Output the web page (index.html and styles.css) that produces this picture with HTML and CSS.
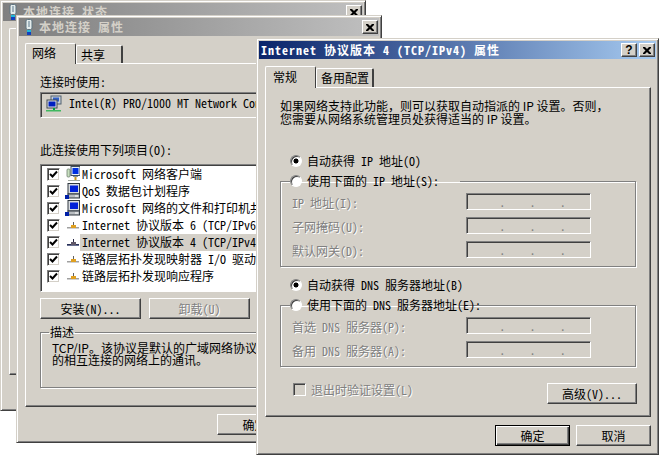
FILE: index.html
```html
<!DOCTYPE html>
<html lang="zh-CN">
<head>
    <meta charset="UTF-8">
    <title>Internet 协议版本 4 (TCP/IPv4) 属性</title>
    <link rel="stylesheet" href="styles.css">
</head>
<body>
    <svg class="defs" width="0" height="0">
        <symbol id="i-conn" viewBox="0 0 16 16">
            <rect x="5" y="0.5" width="6" height="10" rx="1.5" fill="#e4ecec" stroke="#5f7480"/>
            <rect x="7" y="2" width="2" height="6" fill="#9fb2bc"/>
            <rect x="6" y="11" width="4" height="2" fill="#21b8d8"/>
            <rect x="6" y="13" width="4" height="3" fill="#1040c0"/>
        </symbol>
        <symbol id="i-close" viewBox="0 0 8 7">
            <path d="M0 0h2l2 2 2-2h2v1L5.500 3.500 8 6v1H6L4 5 2 7H0V6l2.500-2.500L0 1z" fill="#000"/>
        </symbol>
        <symbol id="i-nic" viewBox="0 0 16 17">
            <rect x="5" y="1" width="10" height="8" fill="#c8d0d8" stroke="#506070"/>
            <rect x="7" y="2.500" width="6" height="4" fill="#3060c8"/>
            <rect x="1" y="5" width="10" height="8" fill="#e0e4e8" stroke="#404850"/>
            <rect x="2.500" y="6.500" width="7" height="5" fill="#0020c0"/>
            <rect x="7" y="13" width="2" height="2" fill="#00a040"/>
            <rect x="0" y="15" width="15" height="1.500" fill="#40b860"/>
        </symbol>
        <symbol id="i-client" viewBox="0 0 16 17">
            <rect x="3" y="3" width="3" height="8" rx="1" fill="#c8e0c0" stroke="#708070" stroke-width="0.800"/>
            <rect x="7" y="0.500" width="9" height="9" fill="#e8f0f8" stroke="#405060"/>
            <rect x="8.500" y="2" width="6" height="6" fill="#0030e0"/>
            <rect x="9" y="10" width="5" height="1" fill="#8090a0"/>
            <rect x="10.500" y="11" width="2" height="3" fill="#c89820"/>
            <rect x="4" y="14" width="12" height="1" fill="#a0a8a0"/>
        </symbol>
        <symbol id="i-svc" viewBox="0 0 16 17">
            <rect x="4" y="0.500" width="11.500" height="10.500" fill="#d8dce0" stroke="#303840"/>
            <rect x="6" y="2.500" width="8" height="6.500" fill="#0020d8"/>
            <rect x="4" y="11" width="11.500" height="4" fill="#b8bcc0" stroke="#303840"/>
            <rect x="11" y="12.500" width="3" height="1" fill="#fff"/>
            <rect x="1" y="12" width="4" height="4" fill="#0020a8"/>
        </symbol>
        <symbol id="i-proto" viewBox="0 0 16 17">
            <rect x="3" y="10" width="12" height="1" fill="#a0a0a0"/>
            <rect x="3" y="11" width="12" height="1" fill="#d0d0d0"/>
            <rect x="9" y="5" width="1" height="3" fill="#606060"/>
            <rect x="7" y="8" width="5" height="3" fill="#e0a020"/>
        </symbol>
        <symbol id="i-proto-on" viewBox="0 0 16 17">
            <rect x="3" y="10" width="12" height="1" fill="#283058"/>
            <rect x="3" y="11" width="12" height="1" fill="#687090"/>
            <rect x="9" y="5" width="1" height="3" fill="#282848"/>
            <rect x="7" y="8" width="5" height="3" fill="#605868"/>
        </symbol>
        <symbol id="i-check" viewBox="0 0 9 9">
            <path d="M1 4 L3.500 6.500 L8 1.500" fill="none" stroke="#000" stroke-width="2"/>
        </symbol>
    </svg>

    <!-- back window, almost everything is covered -->
    <div class="win win-status">
        <div class="title-bar off">
            <svg class="title-icon"><use href="#i-conn"/></svg>
            <span class="title-text">本地连接 状态</span>
            <div class="title-btn"><svg><use href="#i-close"/></svg></div>
        </div>
        <div class="win-body">
            <div class="tabs">
                <div class="tab on">常规</div>
            </div>
            <div class="panel"></div>
        </div>
    </div>

    <div class="win win-props">
        <div class="title-bar off">
            <svg class="title-icon"><use href="#i-conn"/></svg>
            <span class="title-text">本地连接 属性</span>
            <div class="title-btn"><svg><use href="#i-close"/></svg></div>
        </div>
        <div class="win-body">
            <div class="tabs">
                <div class="tab on">网络</div>
                <div class="tab">共享</div>
            </div>
            <div class="panel props-panel">
                <div class="line label-first">连接时使用:</div>
                <div class="nic-box">
                    <svg class="nic-icon"><use href="#i-nic"/></svg>
                    <span>Intel(R) PRO/1000 MT Network Connection</span>
                </div>
                <div class="line label-items">此连接使用下列项目(O):</div>
                <div class="item-list">
                    <div class="item">
                        <span class="check"><svg><use href="#i-check"/></svg></span>
                        <svg class="item-icon"><use href="#i-client"/></svg>
                        <span class="item-text">Microsoft 网络客户端</span>
                    </div>
                    <div class="item">
                        <span class="check"><svg><use href="#i-check"/></svg></span>
                        <svg class="item-icon"><use href="#i-svc"/></svg>
                        <span class="item-text">QoS 数据包计划程序</span>
                    </div>
                    <div class="item">
                        <span class="check"><svg><use href="#i-check"/></svg></span>
                        <svg class="item-icon"><use href="#i-svc"/></svg>
                        <span class="item-text">Microsoft 网络的文件和打印机共享</span>
                    </div>
                    <div class="item">
                        <span class="check"><svg><use href="#i-check"/></svg></span>
                        <svg class="item-icon"><use href="#i-proto"/></svg>
                        <span class="item-text">Internet 协议版本 6 (TCP/IPv6)</span>
                    </div>
                    <div class="item selected">
                        <span class="check"><svg><use href="#i-check"/></svg></span>
                        <svg class="item-icon"><use href="#i-proto-on"/></svg>
                        <span class="item-text">Internet 协议版本 4 (TCP/IPv4)</span>
                    </div>
                    <div class="item">
                        <span class="check"><svg><use href="#i-check"/></svg></span>
                        <svg class="item-icon"><use href="#i-proto"/></svg>
                        <span class="item-text">链路层拓扑发现映射器 I/O 驱动程序</span>
                    </div>
                    <div class="item">
                        <span class="check"><svg><use href="#i-check"/></svg></span>
                        <svg class="item-icon"><use href="#i-proto"/></svg>
                        <span class="item-text">链路层拓扑发现响应程序</span>
                    </div>
                </div>
                <div class="list-btns">
                    <button class="btn wide">安装(N)...</button>
                    <button class="btn wide" disabled>卸载(U)</button>
                </div>
                <fieldset class="group desc-group">
                    <legend class="desc-legend">描述</legend>
                    <div class="desc-text">TCP/IP。该协议是默认的广域网络协议<br>的相互连接的网络上的通讯。</div>
                </fieldset>
            </div>
            <div class="win-footer">
                <button class="btn">确定</button>
                <button class="btn">取消</button>
            </div>
        </div>
    </div>

    <div class="win win-ipv4">
        <div class="title-bar">
            <span class="title-text">Internet 协议版本 4 (TCP/IPv4) 属性</span>
            <div class="title-btn help">?</div>
            <div class="title-btn"><svg><use href="#i-close"/></svg></div>
        </div>
        <div class="win-body">
            <div class="tabs">
                <div class="tab on">常规</div>
                <div class="tab">备用配置</div>
            </div>
            <div class="panel ipv4-panel">
                <div class="intro">如果网络支持此功能，则可以获取自动指派的 IP 设置。否则，<br>您需要从网络系统管理员处获得适当的 IP 设置。</div>

                <div class="radio-row first-radio"><span class="radio on"></span>自动获得 IP 地址(O)</div>
                <fieldset class="group">
                    <legend class="radio-row"><span class="radio"></span>使用下面的 IP 地址(S):</legend>
                    <div class="field-row">
                        <span class="dim">IP 地址(I):</span>
                        <div class="ip-field"><span>.</span><span>.</span><span>.</span></div>
                    </div>
                    <div class="field-row">
                        <span class="dim">子网掩码(U):</span>
                        <div class="ip-field"><span>.</span><span>.</span><span>.</span></div>
                    </div>
                    <div class="field-row">
                        <span class="dim">默认网关(D):</span>
                        <div class="ip-field"><span>.</span><span>.</span><span>.</span></div>
                    </div>
                </fieldset>

                <div class="radio-row second-radio"><span class="radio on"></span>自动获得 DNS 服务器地址(B)</div>
                <fieldset class="group">
                    <legend class="radio-row"><span class="radio"></span>使用下面的 DNS 服务器地址(E):</legend>
                    <div class="field-row">
                        <span class="dim">首选 DNS 服务器(P):</span>
                        <div class="ip-field"><span>.</span><span>.</span><span>.</span></div>
                    </div>
                    <div class="field-row">
                        <span class="dim">备用 DNS 服务器(A):</span>
                        <div class="ip-field"><span>.</span><span>.</span><span>.</span></div>
                    </div>
                </fieldset>

                <div class="panel-bottom">
                    <div class="check-row">
                        <span class="check off"></span>
                        <span class="dim">退出时验证设置(L)</span>
                    </div>
                    <button class="btn adv">高级(V)...</button>
                </div>
            </div>
            <div class="win-footer">
                <button class="btn default">确定</button>
                <button class="btn">取消</button>
            </div>
        </div>
    </div>
</body>
</html>
```

FILE: styles.css
```css
html, body {
    margin: 0;
    padding: 0;
    background: #fff;
}
body {
    width: 665px;
    height: 465px;
    overflow: hidden;
    font-family: "Noto Sans CJK SC", "Liberation Mono", monospace;
    font-feature-settings: "hwid";
    font-size: 12px;
    line-height: 14px;
    color: #000;
}
.defs {
    display: block;
}

/* windows */
.win {
    position: absolute;
    isolation: isolate;
    box-sizing: border-box;
    display: flex;
    flex-direction: column;
    overflow: hidden;
    padding: 2px;
    background: #d4d0c8;
    border: 1px solid;
    border-color: #d4d0c8 #404040 #404040 #d4d0c8;
    box-shadow: inset 1px 1px #fff, inset -1px -1px #808080;
}
.win-status {
    left: 0;
    top: 0;
    width: 366px;
    height: 411px;
}
.win-props {
    left: 16px;
    top: 15px;
    width: 366px;
    height: 428px;
}
.win-ipv4 {
    left: 256px;
    top: 38px;
    width: 403px;
    height: 417px;
}

/* title bars */
.title-bar {
    display: flex;
    align-items: center;
    flex: none;
    height: 18px;
    padding: 0 1px 0 2px;
    background: linear-gradient(to right, #0a246a, #a6caf0);
    color: #fff;
}
.title-bar.off {
    background: linear-gradient(to right, #808080, #c0c0c0);
    color: #d4d0c8;
}
.title-icon {
    flex: none;
    width: 16px;
    height: 16px;
    margin-right: 2px;
}
.title-text {
    flex: 1;
    font-weight: bold;
    letter-spacing: 1px;
    white-space: nowrap;
}
.title-btn {
    display: flex;
    align-items: center;
    justify-content: center;
    flex: none;
    box-sizing: border-box;
    width: 16px;
    height: 14px;
    background: #d4d0c8;
    color: #000;
    font: bold 12px/12px "Liberation Sans", sans-serif;
    border: 1px solid;
    border-color: #fff #404040 #404040 #fff;
    box-shadow: inset -1px -1px #808080;
}
.title-btn svg {
    width: 8px;
    height: 7px;
    margin-right: 1px;
}
.title-btn.help {
    margin-right: 2px;
}

/* window content */
.win-body {
    display: flex;
    flex-direction: column;
    flex: 1;
    min-height: 0;
    padding: 7px 5px 5px 6px;
}
.win-props .win-body {
    padding-right: 6px;
}
.win-ipv4 .win-body {
    padding-bottom: 6px;
}
.tabs {
    display: flex;
    align-items: flex-end;
    flex: none;
    height: 20px;
}
.win-ipv4 .tabs {
    height: 21px;
}
.tab {
    box-sizing: border-box;
    height: 18px;
    padding: 2px 3px 0 4px;
    background: #d4d0c8;
    border: 1px solid #fff;
    border-bottom: none;
    border-right: 2px solid #404040;
    border-radius: 2px 2px 0 0;
}
.win-props .tab {
    width: 47px;
}
.win-ipv4 .tab {
    height: 19px;
}
.tab.on {
    position: relative;
    z-index: 1;
    width: 51px;
    height: 21px;
    margin-bottom: -1px;
    padding: 2px 6px 0;
    border-right: 1px solid #404040;
}
.win-ipv4 .tab.on {
    height: 22px;
    padding: 3px 6px 0 7px;
}
.panel {
    flex: 1;
    min-height: 0;
    box-sizing: border-box;
    padding: 0 14px;
    background: #d4d0c8;
    border: 1px solid;
    border-color: #fff #404040 #404040 #fff;
    box-shadow: inset -1px -1px #808080;
}
.win-status .panel {
    margin-bottom: 28px;
}
.win-footer {
    display: flex;
    justify-content: flex-end;
    flex: none;
    gap: 6px;
    margin-top: 7px;
}
.win-ipv4 .win-footer {
    margin-top: 8px;
}

/* buttons */
.btn {
    box-sizing: border-box;
    width: 75px;
    height: 21px;
    padding: 0;
    background: #d4d0c8;
    font: inherit;
    font-feature-settings: inherit;
    color: #000;
    border: 1px solid;
    border-color: #fff #404040 #404040 #fff;
    box-shadow: inset -1px -1px #808080;
}
.btn.default {
    border-color: #000;
    box-shadow: inset 1px 1px #fff, inset -1px -1px #404040, inset -2px -2px #808080;
}
.btn:disabled {
    color: #808080;
    text-shadow: 1px 1px 0 #fff;
}
.btn.wide {
    width: 101px;
}
.btn.adv {
    width: 90px;
    margin-right: -1px;
}

/* properties tab */
.label-first {
    margin-top: 11px;
}
.nic-box {
    display: flex;
    align-items: center;
    box-sizing: border-box;
    height: 26px;
    margin-top: 3px;
    padding: 0 0 4px 5px;
    white-space: nowrap;
    border: 1px solid;
    border-color: #808080 #fff #fff #808080;
    box-shadow: inset 1px 1px #404040;
}
.nic-icon {
    flex: none;
    width: 16px;
    height: 17px;
    margin-right: 7px;
}
.label-items {
    margin-top: 25px;
}
.item-list {
    box-sizing: border-box;
    height: 128px;
    margin-top: 7px;
    padding-top: 1px;
    background: #fff;
    border: 1px solid;
    border-color: #808080 #fff #fff #808080;
    box-shadow: inset 1px 1px #404040;
}
.item {
    display: flex;
    align-items: center;
    height: 17px;
    padding-left: 6px;
    white-space: nowrap;
}
.check {
    display: flex;
    align-items: center;
    justify-content: center;
    flex: none;
    box-sizing: border-box;
    width: 13px;
    height: 13px;
    background: #fff;
    border: 1px solid;
    border-color: #808080 #fff #fff #808080;
    box-shadow: inset 1px 1px #404040, inset -1px -1px #d4d0c8;
}
.check svg {
    width: 9px;
    height: 9px;
}
.check.off {
    background: #d4d0c8;
}
.item-icon {
    flex: none;
    width: 16px;
    height: 17px;
    margin-left: 4px;
}
.item-text {
    flex: 1;
    height: 17px;
    line-height: 15px;
    padding-left: 2px;
}
.item.selected .item-text {
    background: #d4d0c8;
}
.list-btns {
    display: flex;
    gap: 8px;
    margin-top: 6px;
}
.group {
    min-width: 0;
    margin: 6px 0 0;
    padding: 5px 0 8px;
    border: 1px solid #808080;
    box-shadow: inset 1px 1px #fff, 1px 1px #fff;
}
.desc-group {
    box-sizing: border-box;
    height: 63px;
    padding: 3px 0 0 11px;
}
.desc-legend {
    margin-left: -3px;
    padding: 0 1px;
}
/* hwid would squeeze the chinese punctuation in running text */
.desc-text {
    font-feature-settings: normal;
    line-height: 12px;
    white-space: nowrap;
}

/* ip settings tab */
.intro {
    margin-top: 11px;
    font-feature-settings: normal;
    line-height: 13px;
    white-space: nowrap;
}
.radio-row {
    display: flex;
    align-items: center;
    height: 14px;
    padding-left: 10px;
    white-space: nowrap;
}
legend.radio-row {
    box-sizing: border-box;
    width: 170px;
    margin-left: 9px;
    padding: 0;
}
.first-radio {
    margin-top: 29px;
}
.second-radio {
    margin-top: 11px;
}
.radio {
    flex: none;
    box-sizing: border-box;
    width: 12px;
    height: 12px;
    margin-right: 5px;
    background: #fff;
    border: 1px solid;
    border-color: #808080 #fff #fff #808080;
    border-radius: 50%;
    box-shadow: inset 1px 1px #404040;
}
.radio.on {
    background: radial-gradient(circle at center, #000 2.2px, #fff 2.8px);
}
.field-row {
    display: flex;
    align-items: center;
    justify-content: space-between;
    height: 17px;
    margin-top: 7px;
    padding: 0 44px 0 11px;
}
.field-row:first-of-type {
    margin-top: 0;
}
.field-row .dim {
    padding-top: 2px;
}
.dim {
    color: #808080;
    text-shadow: 1px 1px 0 #fff;
}
.ip-field {
    display: flex;
    justify-content: space-evenly;
    flex: none;
    box-sizing: border-box;
    width: 125px;
    height: 17px;
    padding-left: 8px;
    color: #808080;
    line-height: 15px;
    border: 1px solid;
    border-color: #808080 #fff #fff #808080;
    box-shadow: inset 1px 1px #404040;
}
.panel-bottom {
    display: flex;
    justify-content: space-between;
    margin-top: 16px;
}
.check-row {
    display: flex;
    align-items: flex-start;
    gap: 5px;
    padding-left: 13px;
}
```
